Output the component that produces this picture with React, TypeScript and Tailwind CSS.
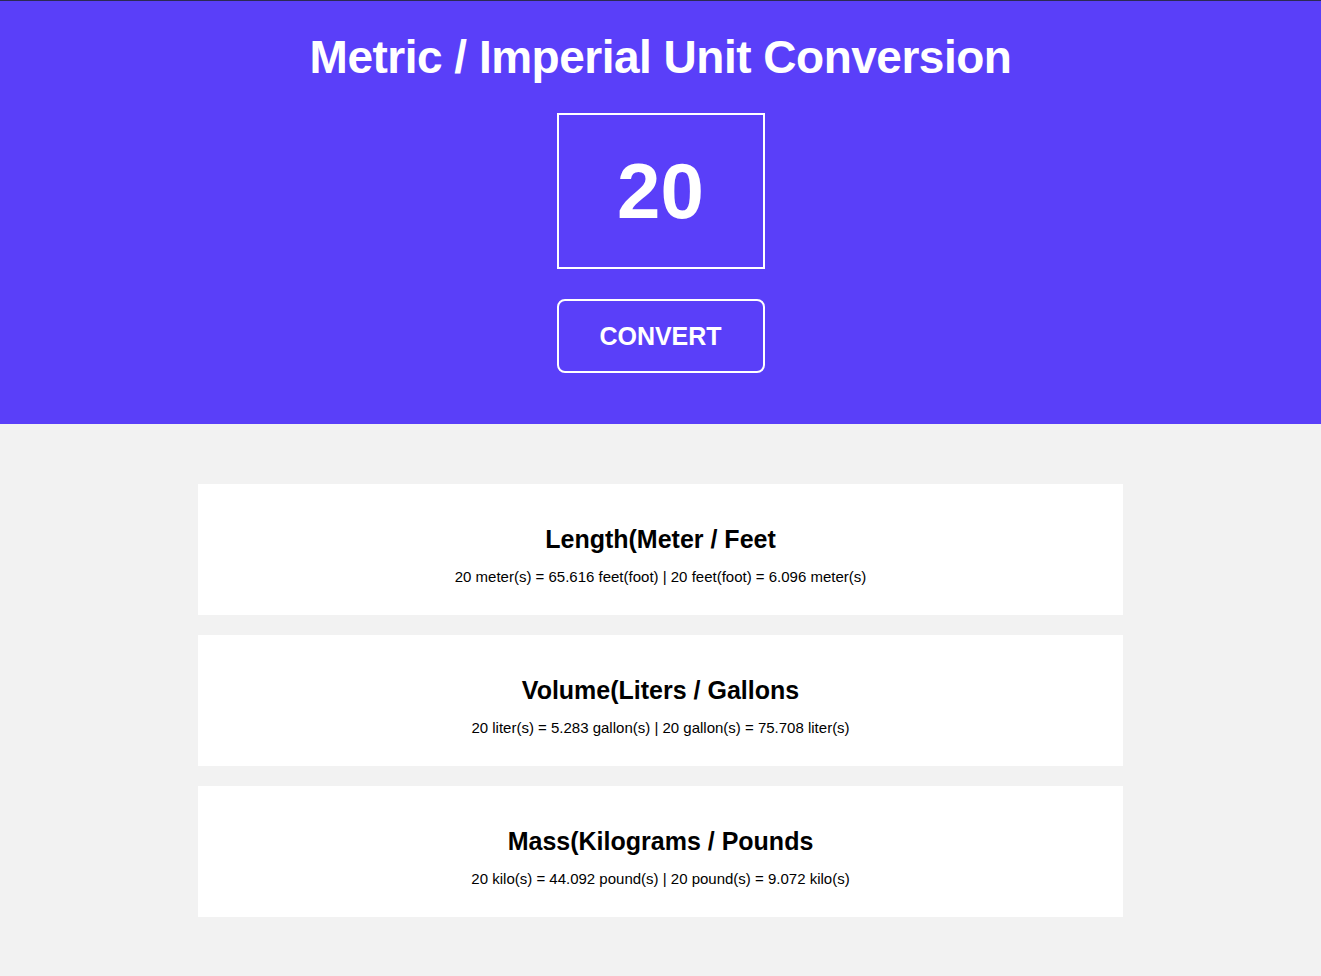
import React, { useState } from "react";

const font = { fontFamily: '"Liberation Sans", Arial, Helvetica, sans-serif' };

export default function App() {
  const [val, setVal] = useState("20");
  const [n, setN] = useState(20);
  const cards = [
    {
      title: "Length(Meter / Feet",
      text: `${n} meter(s) = ${(n * 3.2808).toFixed(3)} feet(foot) | ${n} feet(foot) = ${(n * 0.3048).toFixed(3)} meter(s)`,
    },
    {
      title: "Volume(Liters / Gallons",
      text: `${n} liter(s) = ${(n * 0.26417).toFixed(3)} gallon(s) | ${n} gallon(s) = ${(n * 3.7854).toFixed(3)} liter(s)`,
    },
    {
      title: "Mass(Kilograms / Pounds",
      text: `${n} kilo(s) = ${(n * 2.2046).toFixed(3)} pound(s) | ${n} pound(s) = ${(n * 0.4536).toFixed(3)} kilo(s)`,
    },
  ];
  return (
    <div className="min-h-[976px] bg-[#f2f2f2]" style={font}>
      <header className="border-t border-[#2b2a55] bg-[#5a3ff9] flex flex-col items-center pt-[28px] pb-[51px]">
        <h1 className="text-white font-bold text-[46px] leading-[56px] tracking-[-0.5px]">Metric / Imperial Unit Conversion</h1>
        <input
          value={val}
          onChange={(e) => setVal(e.target.value)}
          className="mt-[28px] w-[208px] h-[156px] border-2 border-white bg-transparent text-white text-center font-bold text-[78px] outline-none"
          style={font}
        />
        <button
          onClick={() => setN(Number(val) || 0)}
          className="mt-[30px] w-[208px] h-[74px] border-2 border-white rounded-lg text-white font-bold text-[25px] pt-[1px]"
          style={font}
        >
          CONVERT
        </button>
      </header>
      <main className="w-[925px] mx-auto pt-[60px] flex flex-col gap-[20px]">
        {cards.map((c) => (
          <section key={c.title} className="bg-white h-[131px] flex flex-col items-center pt-[40px]">
            <h2 className="font-bold text-[25px] leading-[30px] text-black">{c.title}</h2>
            <p className="mt-[13px] text-[15px] leading-[20px] text-black">{c.text}</p>
          </section>
        ))}
      </main>
    </div>
  );
}
